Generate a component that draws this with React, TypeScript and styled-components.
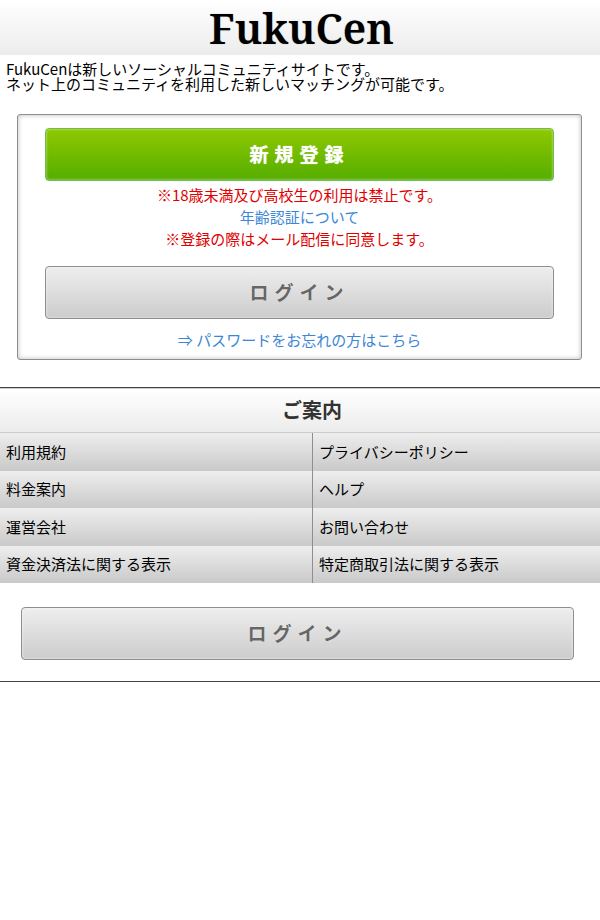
import React from "react";
import styled, { createGlobalStyle, css } from "styled-components";

const GlobalStyle = createGlobalStyle`
  *, *::before, *::after {
    box-sizing: border-box;
  }
  body {
    margin: 0;
    background: #fff;
    color: #000;
    font-family: "Noto Sans CJK JP", "Noto Sans", sans-serif;
    font-size: 15px;
    line-height: 22px;
  }
`;

const Header = styled.header`
  display: flex;
  justify-content: center;
  align-items: center;
  height: 55px;
  padding-left: 3px;
  background: linear-gradient(#fff, #ececec);
`;

const Logo = styled.h1`
  margin: 0;
  color: #000;
  font-family: "Noto Serif", "Droid Serif", "Liberation Serif", serif;
  font-size: 42px;
  font-weight: 600;
  line-height: 60px;
  text-shadow: 0 0 1px rgba(0, 0, 0, 0.4);
`;

const Intro = styled.p`
  margin: 6px 6px 23px;
  line-height: 15px;
`;

const Panel = styled.section`
  margin: 0 18px 27px 17px;
  padding: 13px 27px 8px;
  border: 1px solid #8e8e8e;
  border-radius: 3px;
  box-shadow: inset 0 0 5px #bbb;
  text-align: center;
`;

const green = css`
  color: #fff;
  background: linear-gradient(#8fc800, #55ae00);
  border-color: #6cbf4e;
  box-shadow: inset 0 0 2px 1px rgba(255, 255, 255, 0.3);
  text-shadow: 0 0 1px #fff;
`;

const gray = css`
  color: #666;
  background: linear-gradient(#eee, #ccc);
  border-color: #8e8e8e;
  box-shadow: inset 0 0 2px 1px rgba(255, 255, 255, 0.3);
  text-shadow: 0 0 1px #fff;
`;

const Button = styled.button<{ $primary?: boolean }>`
  display: block;
  width: 100%;
  height: 53px;
  padding: 0 0 2px;
  border: 1px solid;
  border-radius: 4px;
  font-family: inherit;
  font-size: 19px;
  font-weight: 700;
  letter-spacing: 6px;
  cursor: pointer;
  ${({ $primary }) => ($primary ? green : gray)}
`;

const Notice = styled.div`
  margin: 3px 0 16px;
  color: #e00000;

  p {
    margin: 0;
  }
`;

const Link = styled.a`
  color: #3c87d5;
  text-decoration: none;
`;

const Forgot = styled.p`
  margin: 10px 0 0;
`;

const Guide = styled.nav`
  border-top: 1px solid #444;
`;

const GuideTitle = styled.h2`
  margin: 0;
  padding: 0 0 2px 24px;
  border-top: 1px solid #ccc;
  border-bottom: 1px solid #ccc;
  background: linear-gradient(#fff, #ececec);
  color: #333;
  font-size: 20px;
  line-height: 41px;
  text-align: center;
`;

const GuideList = styled.ul`
  display: grid;
  grid-template-columns: 52% 48%;
  grid-auto-rows: 1fr;
  min-height: 150px;
  margin: 0;
  padding: 0;
  list-style: none;
`;

const GuideItem = styled.li`
  display: flex;
  background: linear-gradient(#eee, #c9c9c9);

  &:nth-child(even) {
    border-left: 1px solid #8e8e8e;
  }
`;

const GuideLink = styled.a`
  display: flex;
  flex: 1;
  align-items: center;
  padding: 0 6px;
  color: #000;
  text-decoration: none;
`;

const Footer = styled.footer`
  padding: 24px 26px 21px 21px;
  border-bottom: 1px solid #444;
`;

const guideLinks = [
  "利用規約",
  "プライバシーポリシー",
  "料金案内",
  "ヘルプ",
  "運営会社",
  "お問い合わせ",
  "資金決済法に関する表示",
  "特定商取引法に関する表示",
];

export default function App() {
  return (
    <>
      <GlobalStyle />
      <Header>
        <Logo>FukuCen</Logo>
      </Header>
      <main lang="ja">
        <Intro>
          FukuCenは新しいソーシャルコミュニティサイトです。
          <br />
          ネット上のコミュニティを利用した新しいマッチングが可能です。
        </Intro>
        <Panel>
          <Button type="button" $primary>
            新規登録
          </Button>
          <Notice>
            <p>※18歳未満及び高校生の利用は禁止です。</p>
            <p>
              <Link href="#age">年齢認証について</Link>
            </p>
            <p>※登録の際はメール配信に同意します。</p>
          </Notice>
          <Button type="button">ログイン</Button>
          <Forgot>
            <Link href="#password">⇒ パスワードをお忘れの方はこちら</Link>
          </Forgot>
        </Panel>
        <Guide aria-labelledby="guide-title">
          <GuideTitle id="guide-title">ご案内</GuideTitle>
          <GuideList>
            {guideLinks.map((label) => (
              <GuideItem key={label}>
                <GuideLink href="#guide">{label}</GuideLink>
              </GuideItem>
            ))}
          </GuideList>
        </Guide>
      </main>
      <Footer>
        <Button type="button">ログイン</Button>
      </Footer>
    </>
  );
}
